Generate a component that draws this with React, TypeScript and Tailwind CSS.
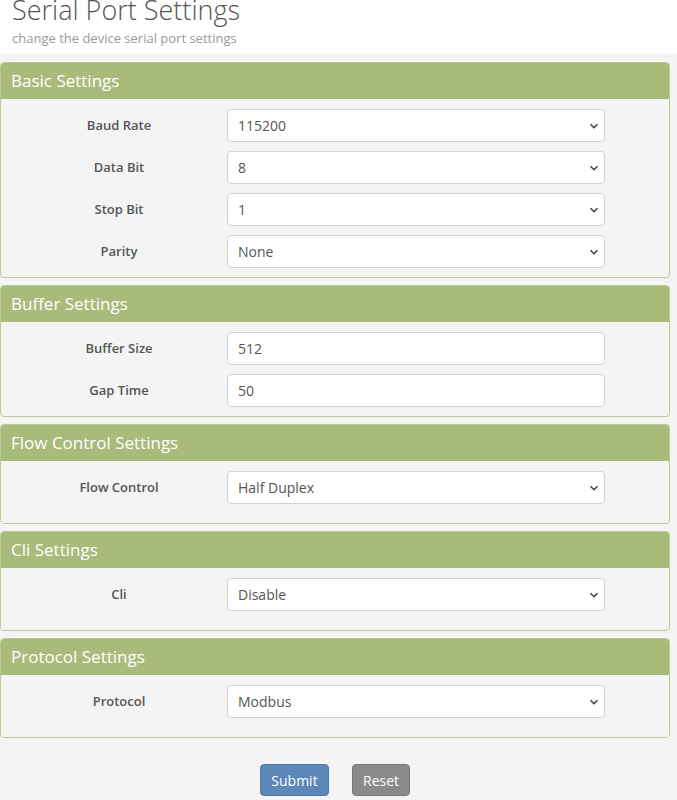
import React from "react";

const Chevron = () => (
  <svg width="10" height="10" viewBox="0 0 10 10" className="pointer-events-none absolute right-[5px] top-1/2 -translate-y-1/2">
    <path d="M1.5 3.2 L5 6.7 L8.5 3.2" fill="none" stroke="#444" strokeWidth="1.6" />
  </svg>
);

type Row = { label: string; value: string; select: boolean };

const SelectBox = ({ value }: { value: string }) => (
  <div className="relative h-[33px] w-[378px] rounded-[4px] border border-[#d2d2d2] bg-white pl-[10px] text-[14px] leading-[31px] text-[#555]">
    {value}
    <Chevron />
  </div>
);

const InputBox = ({ value }: { value: string }) => (
  <div className="h-[33px] w-[378px] rounded-[4px] border border-[#d2d2d2] bg-white pl-[10px] text-[14px] leading-[31px] text-[#555]">
    {value}
  </div>
);

const Panel = ({ title, rows, extra }: { title: string; rows: Row[]; extra?: boolean }) => (
  <div className="overflow-hidden rounded-[4px] border border-[#b9ca95]">
    <div className="flex h-[36px] items-center bg-[#a8bb7a] pl-[10px] text-[17px] text-white">{title}</div>
    <div className={`bg-[#f4f4f4] pt-[10px] ${extra ? "pb-[10px]" : ""}`}>
      {rows.map((r) => (
        <div key={r.label} className="mb-[9px] flex items-center">
          <div className="w-[226px] pl-[10px] text-center text-[13px] font-semibold text-[#555]">{r.label}</div>
          {r.select ? <SelectBox value={r.value} /> : <InputBox value={r.value} />}
        </div>
      ))}
    </div>
  </div>
);

export default function App() {
  return (
    <div className="min-h-[800px] overflow-hidden bg-[#f4f4f4]" style={{ fontFamily: '"Open Sans", sans-serif' }}>
      <div className="flex h-[53px] flex-col bg-white pl-[12px]">
        <div className="mt-[-9px] text-[27px] font-light leading-[38px] text-[#555]">Serial Port Settings</div>
        <div className="text-[13px] leading-[18px] text-[#999]">change the device serial port settings</div>
      </div>
      <div className="flex w-[670px] flex-col gap-[7px] pt-[9px]">
        <Panel
          title="Basic Settings"
          rows={[
            { label: "Baud Rate", value: "115200", select: true },
            { label: "Data Bit", value: "8", select: true },
            { label: "Stop Bit", value: "1", select: true },
            { label: "Parity", value: "None", select: true },
          ]}
        />
        <Panel
          title="Buffer Settings"
          rows={[
            { label: "Buffer Size", value: "512", select: false },
            { label: "Gap Time", value: "50", select: false },
          ]}
        />
        <Panel title="Flow Control Settings" rows={[{ label: "Flow Control", value: "Half Duplex", select: true }]} extra />
        <Panel title="Cli Settings" rows={[{ label: "Cli", value: "Disable", select: true }]} extra />
        <Panel title="Protocol Settings" rows={[{ label: "Protocol", value: "Modbus", select: true }]} extra />
      </div>
      <div className="flex w-[670px] justify-center gap-[23px] pt-[26px]">
        <button className="h-[32px] w-[69px] rounded-[4px] border border-[#4f7aa6] bg-[#5b88b6] text-[14px] text-white">Submit</button>
        <button className="h-[32px] w-[58px] rounded-[4px] border border-[#7a7a7a] bg-[#8a8a8a] text-[14px] text-white">Reset</button>
      </div>
    </div>
  );
}
